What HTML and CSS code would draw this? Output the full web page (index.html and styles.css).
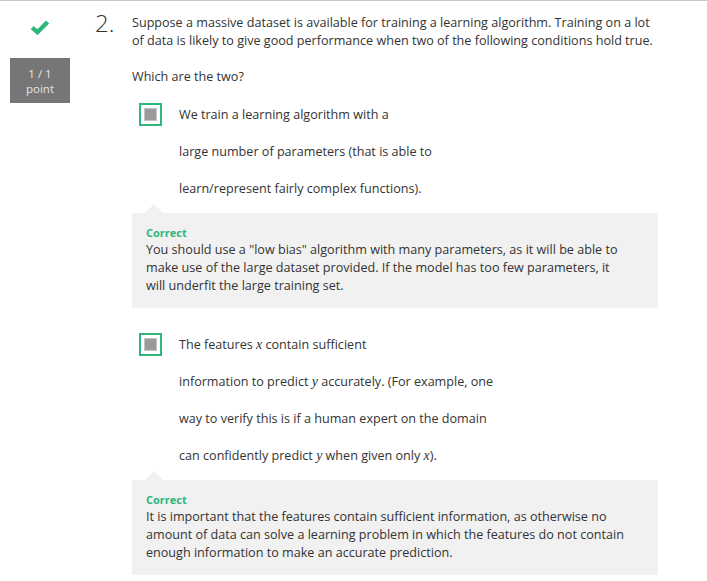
FILE: index.html
```html
<!DOCTYPE html>
<html>
<head>
<meta charset="utf-8">
<link rel="stylesheet" href="styles.css">
</head>
<body>
<div class="quiz">
  <div class="question">
    <div class="gutter">
      <svg class="check" width="20" height="15" viewBox="0 0 20 15"><path d="M2.2 7.6 L7.4 12.2 L17.6 2" fill="none" stroke="#2fb67a" stroke-width="4.4"/></svg>
      <div class="badge">1 / 1<br>point</div>
    </div>
    <div class="num">2.</div>
    <div class="content">
      <p class="prompt">Suppose a massive dataset is available for training a learning algorithm. Training on a lot of data is likely to give good performance when two of the following conditions hold true.</p>
      <p class="prompt">Which are the two?</p>
      <div class="option first">
        <span class="box"><span class="fill"></span></span>
        <div class="opt-text">We train a learning algorithm with a<br>large number of parameters (that is able to<br>learn/represent fairly complex functions).</div>
      </div>
      <div class="feedback">
        <div class="fb-title">Correct</div>
        <div class="fb-text">You should use a "low bias" algorithm with many parameters, as it will be able to make use of the large dataset provided. If the model has too few parameters, it will underfit the large training set.</div>
      </div>
      <div class="option">
        <span class="box"><span class="fill"></span></span>
        <div class="opt-text">The features <i class="m">x</i> contain sufficient<br>information to predict <i class="m">y</i> accurately. (For example, one<br>way to verify this is if a human expert on the domain<br>can confidently predict <i class="m">y</i> when given only <i class="m">x</i>).</div>
      </div>
      <div class="feedback">
        <div class="fb-title">Correct</div>
        <div class="fb-text">It is important that the features contain sufficient information, as otherwise no amount of data can solve a learning problem in which the features do not contain enough information to make an accurate prediction.</div>
      </div>
    </div>
  </div>
</div>
</body>
</html>
```

FILE: styles.css
```css
html, body {
  margin: 0;
  padding: 0;
  background: #fff;
}
body {
  font-family: "Open Sans", "Liberation Sans", sans-serif;
  color: #333;
  font-size: 12.6px;
  line-height: 18px;
}
.quiz {
  border-top: 1px solid #c9c9c9;
  height: 580px;
  overflow: hidden;
}
.question {
  display: flex;
  align-items: flex-start;
}
.gutter {
  width: 70px;
  padding-left: 10px;
  padding-top: 19px;
  display: flex;
  flex-direction: column;
}
.check {
  display: block;
  margin-left: 20px;
}
.badge {
  margin-top: 23px;
  width: 60px;
  background: #767676;
  color: #e4e4e4;
  font-size: 11.5px;
  line-height: 15px;
  text-align: center;
  padding: 8px 0 7px;
}
.num {
  width: 37px;
  padding-left: 15px;
  padding-top: 8px;
  font-size: 24px;
  line-height: 28px;
  font-weight: 300;
  color: #333;
}
.content {
  width: 526px;
  padding-top: 13px;
}
.prompt {
  margin: 0 0 18px;
}
.prompt + .prompt {
  margin-bottom: 0;
}
.option {
  display: flex;
  align-items: flex-start;
  margin-top: 18px;
  padding-left: 7px;
}
.option.first {
  margin-top: 10px;
}
.box {
  width: 19px;
  height: 19px;
  border: 2px solid #2fb67a;
  background: #fff;
  margin-top: 7px;
  display: flex;
  align-items: center;
  justify-content: center;
  flex: none;
}
.fill {
  width: 13px;
  height: 13px;
  box-sizing: border-box;
  background: #9a9a9a;
  border: 1px solid #c4c4c4;
}
.opt-text {
  margin-left: 17px;
  line-height: 37px;
}
.m {
  font-family: "Liberation Serif", "DejaVu Serif", serif;
  font-size: 14px;
}
.feedback {
  position: relative;
  margin-top: 6px;
  background: #f1f1f1;
  padding: 12px 28px 13px 14px;
}
.feedback::before {
  content: "";
  position: absolute;
  left: 13px;
  top: -9px;
  border-left: 9px solid transparent;
  border-right: 9px solid transparent;
  border-bottom: 9px solid #f1f1f1;
}
.fb-title {
  color: #2fb67a;
  font-weight: 700;
  font-size: 11px;
  line-height: 16px;
}
.fb-text {
  line-height: 18px;
}
```
